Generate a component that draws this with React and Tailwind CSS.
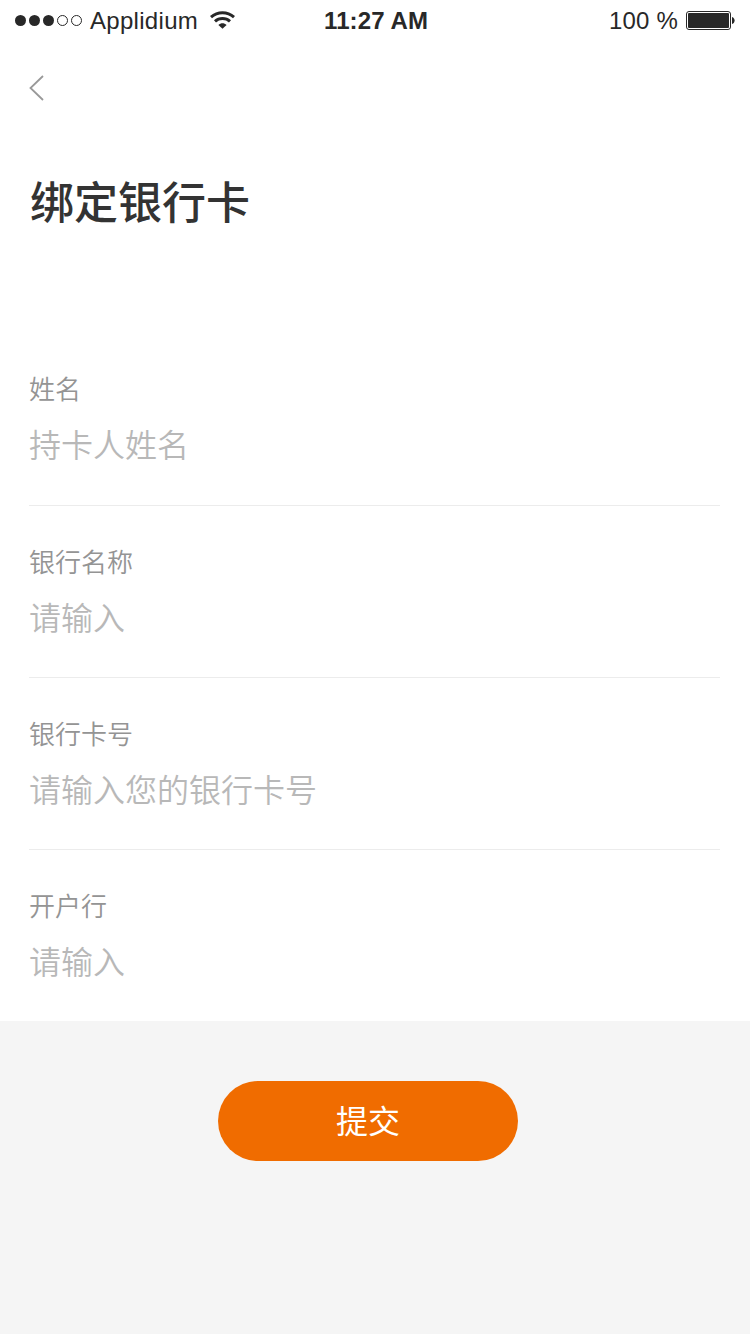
import React, { useState } from 'react';

const fields = [
  { name: 'holder', label: '姓名', placeholder: '持卡人姓名' },
  { name: 'bank', label: '银行名称', placeholder: '请输入' },
  { name: 'cardNumber', label: '银行卡号', placeholder: '请输入您的银行卡号' },
  { name: 'branch', label: '开户行', placeholder: '请输入' },
];

const StatusBar = () => {
  return (
    <div className="flex h-10 items-center justify-between pl-[15px] pr-[15px] font-['Liberation_Sans',sans-serif] text-2xl text-[#282828]">
      <div className="flex flex-1 items-center">
        <svg width="68" height="12" viewBox="0 0 68 12" fill="none">
          <circle cx="5.5" cy="6.5" r="5.5" fill="#282828" />
          <circle cx="19.5" cy="6.5" r="5.5" fill="#282828" />
          <circle cx="33.5" cy="6.5" r="5.5" fill="#282828" />
          <circle cx="47.5" cy="6.5" r="5" stroke="#282828" />
          <circle cx="61.5" cy="6.5" r="5" stroke="#282828" />
        </svg>
        <span className="ml-[7px] pt-0.5 tracking-[0.3px]">Applidium</span>
        <svg className="ml-3" width="26" height="18" viewBox="0 0 26 18" fill="none">
          <path d="M1 6.2C7.7 0.3 17.3 0.3 24 6.2" stroke="#282828" strokeWidth="3" />
          <path d="M5 10.4C9.2 6.6 15.8 6.6 20 10.4" stroke="#282828" strokeWidth="3" />
          <path d="M8.4 14C10.8 11.8 14.2 11.8 16.6 14L12.5 17.8Z" fill="#282828" />
        </svg>
      </div>
      <span className="pl-0.5 pt-0.5 font-bold tracking-[0.1px]">11:27 AM</span>
      <div className="flex flex-1 items-center justify-end">
        <span className="pt-0.5 tracking-[0.2px]">100 %</span>
        <svg className="ml-2" width="49" height="20" viewBox="0 0 49 20" fill="none">
          <rect x="0.5" y="1.5" width="44" height="18" rx="2.5" stroke="#282828" />
          <rect x="2" y="3" width="41" height="15" rx="1" fill="#282828" />
          <path d="M46 7C49.5 8 49.5 13 46 14Z" fill="#282828" />
        </svg>
      </div>
    </div>
  );
};

const Field = ({ field, value, onChange }) => {
  return (
    <label className="block h-[172px] border-b border-[#ececec] pt-[35px] first:pt-[34px] last:border-b-0">
      <span className="block h-10 text-[26px] font-[350] leading-10 text-[#949494]">{field.label}</span>
      <input
        name={field.name}
        value={value}
        onChange={onChange}
        placeholder={field.placeholder}
        className="mt-[11px] block h-12 w-full text-[32px] font-[350] leading-[48px] text-[#333] outline-none placeholder:text-[#b8b8b8]"
      />
    </label>
  );
};

const App = () => {
  const [form, setForm] = useState({ holder: '', bank: '', cardNumber: '', branch: '' });

  const handleChange = (event) => {
    setForm({ ...form, [event.target.name]: event.target.value });
  };

  return (
    <div className="flex h-[1334px] w-[750px] flex-col overflow-hidden bg-[#f5f5f5] font-['Noto_Sans_CJK_SC',sans-serif]">
      <div className="h-[1021px] bg-white">
        <StatusBar />

        <button className="ml-[29px] mt-[35px] block">
          <svg width="15" height="26" viewBox="0 0 15 26" fill="none">
            <path d="M14 1L1.5 13L14 25" stroke="#999" strokeWidth="1.8" />
          </svg>
        </button>

        <h1 className="ml-[30px] mt-[67px] h-16 text-[44px] font-medium leading-[64px] text-[#333]">绑定银行卡</h1>

        <form className="ml-[29px] mr-[30px] mt-[102px]">
          {fields.map((field) => (
            <Field key={field.name} field={field} value={form[field.name]} onChange={handleChange} />
          ))}
        </form>
      </div>

      <button className="ml-[218px] mt-[60px] h-20 w-[300px] rounded-full bg-[#f06c00] pb-1 text-[32px] text-white">
        提交
      </button>
    </div>
  );
};

export default App;
